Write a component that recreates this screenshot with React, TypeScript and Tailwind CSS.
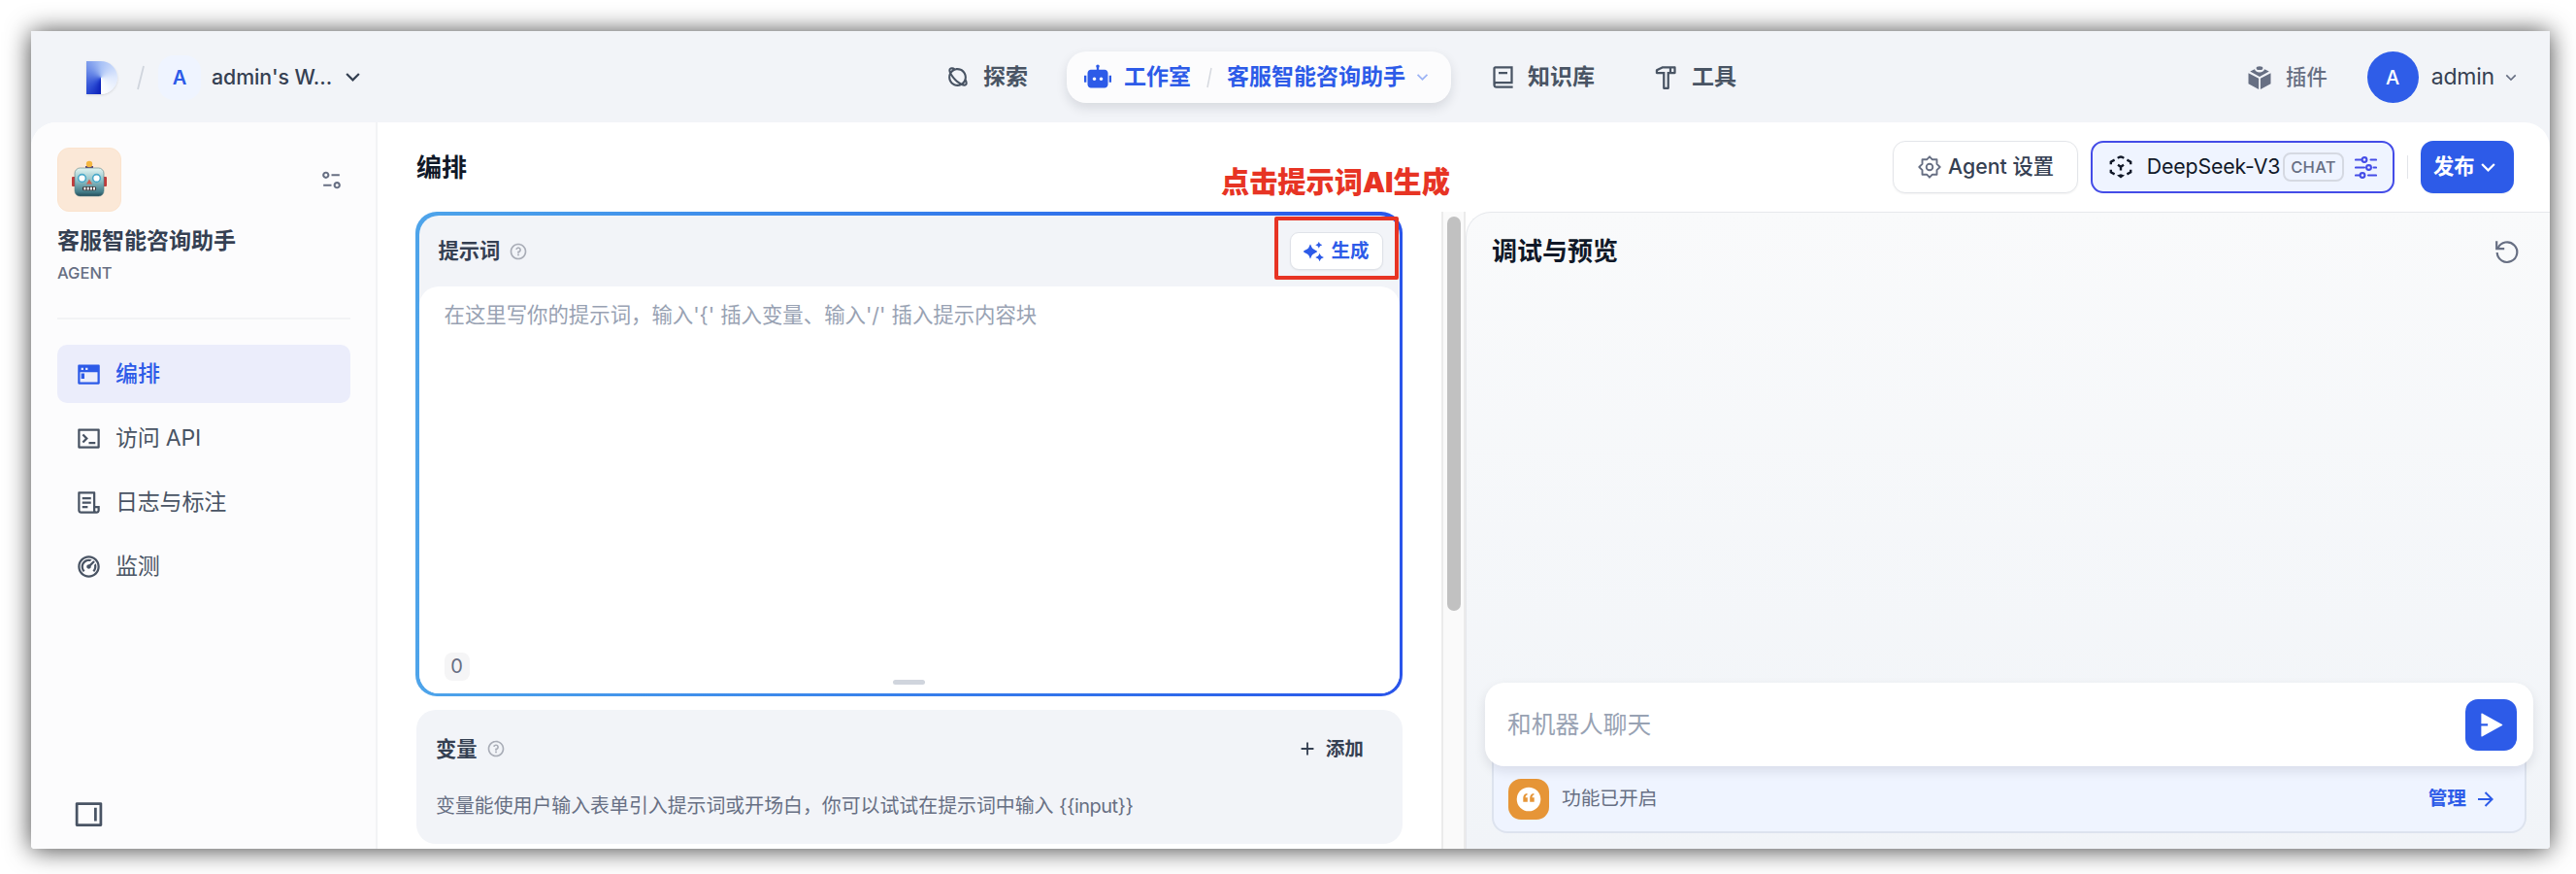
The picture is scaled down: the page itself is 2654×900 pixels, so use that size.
import type { ComponentType } from 'react'
import {
  RiAddLine,
  RiArrowDownSLine,
  RiArrowRightLine,
  RiBook2Line,
  RiDashboard2Line,
  RiEqualizer2Line,
  RiFileList3Line,
  RiHammerLine,
  RiLayoutRight2Line,
  RiPlanetLine,
  RiQuestionLine,
  RiRobot2Fill,
  RiSendPlane2Fill,
  RiTerminalBoxLine,
  RiTerminalWindowFill,
} from 'react-icons/ri'

interface MenuItem {
  label: string
  icon: ComponentType<{ className?: string }>
  active?: boolean
}

const MENU: MenuItem[] = [
  { label: '编排', icon: RiTerminalWindowFill, active: true },
  { label: '访问 API', icon: RiTerminalBoxLine },
  { label: '日志与标注', icon: RiFileList3Line },
  { label: '监测', icon: RiDashboard2Line },
]

function Logo() {
  return (
    <div className="h-[34px] w-8 shrink-0 rounded-r-full bg-[conic-gradient(from_0deg_at_48%_50%,#a9c2f6_0deg,#dfe9fd_90deg,#ffffff_180deg,#0a1fb8_180deg,#2f4fd6_230deg,#6d8de8_300deg,#a9c2f6_360deg)] shadow-sm" />
  )
}

function RobotFace() {
  return (
    <svg viewBox="0 0 36 38" className="-mt-[3px] h-[38px] w-9">
      <defs>
        <linearGradient id="face" x1="0" y1="0" x2="0" y2="1">
          <stop offset="0" stopColor="#e3f5f2" />
          <stop offset="0.45" stopColor="#8fc0c6" />
          <stop offset="0.85" stopColor="#437c88" />
          <stop offset="1" stopColor="#234b58" />
        </linearGradient>
      </defs>
      <rect x="0" y="17" width="4" height="10" rx="1" fill="#c23b3b" />
      <rect x="32" y="17" width="4" height="10" rx="1" fill="#c23b3b" />
      <path d="M14 6h8v4h-8z" fill="#5b4377" />
      <circle cx="18" cy="4" r="3.2" fill="#f4b63f" />
      <rect x="3" y="8" width="30" height="29" rx="5.5" fill="url(#face)" stroke="#557d83" strokeWidth="0.6" />
      <circle cx="10.5" cy="18.5" r="3.9" fill="#fff" stroke="#4aa9c9" strokeWidth="1.6" />
      <circle cx="25.5" cy="18.5" r="3.9" fill="#fff" stroke="#4aa9c9" strokeWidth="1.6" />
      <path d="M18 19.5l3 5h-6z" fill="#d2604f" />
      <rect x="11" y="27" width="14" height="4.2" rx="1.5" fill="#3b3437" />
      <path d="M12.4 27.8h2v2.6h-2zM15.7 27.8h2v2.6h-2zM18.9 27.8h2v2.6h-2zM22 27.8h2v2.6h-2z" fill="#fff" />
    </svg>
  )
}

function PluginIcon() {
  return (
    <svg viewBox="0 0 24 24" className="size-6" fill="currentColor">
      <path d="M.5 7.2l10.6 5.6V24L.5 18.3zM23.5 7.2l-10.6 5.6V24l10.6-5.7z" />
      <path d="M2.2 5.6L7 3.2c.3 2 2.3 3.2 5 3.2s4.7-1.2 5-3.2l4.8 2.4L12 10.9z" />
      <ellipse cx="12" cy="2.2" rx="3.4" ry="1.9" />
    </svg>
  )
}

function GearIcon() {
  return (
    <svg viewBox="0 0 24 24" className="h-6 w-6" fill="none" stroke="currentColor" strokeWidth="1.9" strokeLinejoin="round">
      <path d="M12 1.3l2.9 3h4.6v4.6L22.7 12l-3.2 3.1v4.6h-4.6l-2.9 3-2.9-3H4.5v-4.6L1.3 12l3.2-3.1V4.3h4.6z" />
      <circle cx="12" cy="12" r="3.3" />
    </svg>
  )
}

function ResetIcon() {
  return (
    <svg viewBox="0 0 26 26" className="size-[26px]" fill="none" stroke="currentColor" strokeWidth="2.2">
      <path d="M3.6 9.4A10.3 10.3 0 1 1 2.7 14" />
      <path d="M2.2 2.2v8h8" />
    </svg>
  )
}

function SparkleIcon() {
  return (
    <svg viewBox="0 0 21 20" className="h-5 w-[21px]" fill="currentColor">
      <path d="M7 2.6c.4 0 .7 2.3 2 3.9 1.3 1.5 5.1 2.7 5.1 3.5s-3.8 2-5.1 3.5c-1.3 1.6-1.6 3.9-2 3.9s-.7-2.3-2-3.9C3.7 12-.1 10.8-.1 10S3.700 8 5 6.500c1.3-1.600 1.600-3.900 2-3.900z" />
      <path d="M15.8 0c.3 0 .5 1.3 1.2 2s2.200.9 2.200 1.300-1.500.6-2.200 1.300-.9 2-1.200 2-.5-1.300-1.200-2-2.200-.9-2.200-1.300 1.500-.6 2.200-1.300.9-2 1.200-2zM16.600 12c.4 0 .6 1.700 1.500 2.500.9.9 2.700 1 2.700 1.500s-1.800.7-2.700 1.500c-.9.900-1.100 2.500-1.500 2.500s-.6-1.600-1.500-2.500c-.9-.8-2.700-1-2.700-1.500s1.800-.6 2.700-1.500c.9-.8 1.100-2.500 1.500-2.500z" />
    </svg>
  )
}

// Dashed cube used for models without a provider logo
function ModelIcon() {
  return (
    <svg viewBox="0 0 24 24" className="size-6" fill="none" stroke="#101828" strokeWidth="2.4">
      <path d="M8.8 2.9Q12 .2 15.2 2.9" />
      <path d="M8 20.5l4-1.3 4 1.3-4 3z" fill="#101828" stroke="none" />
      <path d="M5.6 4.6L1.8 6.6v2.6M18.4 4.6l3.8 2v2.6M1.8 14.8v2.6l3.8 2M22.2 14.8v2.6l-3.8 2" />
      <path d="M9 9.8l3 2 3-2M12 11.5v4" />
    </svg>
  )
}

function SlidersIcon() {
  return (
    <svg viewBox="0 0 23 23" className="size-[23px]" fill="none" stroke="#444ce7" strokeWidth="2.1" strokeLinecap="round">
      <path d="M1 3.5h6M16.5 3.5H22M1 11.5h9M19.5 11.5H22M1 19.5h3.5M14 19.5h8" />
      <circle cx="10" cy="3.5" r="2.4" />
      <circle cx="14.5" cy="11.5" r="2.4" />
      <circle cx="8" cy="19.5" r="2.4" />
    </svg>
  )
}

function QuoteBubble() {
  return (
    <svg viewBox="0 0 26 26" className="size-[26px]">
      <circle cx="13" cy="13" r="12.3" fill="#fff" />
      <path
        d="M11.8 8.3c-1.5.6-2.2 1.7-2.2 2.9h2.2v4.6H7.3v-4.2c0-2.6 1.4-4.2 4-4.7zM18.7 8.3c-1.5.6-2.2 1.7-2.2 2.9h2.2v4.6h-4.5v-4.2c0-2.6 1.4-4.2 4-4.7z"
        fill="#e69537"
      />
    </svg>
  )
}

function Header() {
  return (
    <header className="flex h-[94px] shrink-0 items-center justify-between pt-px pr-[30px] pl-[57px] text-[#495464]">
      <div className="flex w-[887px] items-center">
        <Logo />
        <svg viewBox="0 0 8 26" className="ml-5 h-[26px] w-2" stroke="#d0d5dd" strokeWidth="1.8">
          <path d="M1 25L7 1" />
        </svg>
        <div className="ml-3.5 flex h-[46px] w-11 items-center justify-center rounded-2xl bg-[#eff4ff] text-[20px] font-semibold text-[#2d5be8]">
          A
        </div>
        <span className="ml-[11px] text-[21.3px] font-medium tracking-[-0.05px] text-[#354052]">admin's W...</span>
        <RiArrowDownSLine className="ml-2 size-[27px] text-[#354052]" />
      </div>

      <nav className="flex flex-1 items-center text-[23px] font-bold">
        <RiPlanetLine className="-ml-0.5 size-[25px]" />
        <span className="ml-3.5 font-semibold">探索</span>
        <div className="ml-10 flex h-[53px] w-[396px] items-center rounded-[20px] bg-[#fcfcfd] pl-[18px] text-[#2d5be8] shadow-[0_5px_12px_rgba(16,24,40,0.12)]">
          <RiRobot2Fill className="size-7" />
          <span className="ml-[13px]">工作室</span>
          <svg viewBox="0 0 6 22" className="mx-4 h-[22px] w-1.5" stroke="#d6d9df" strokeWidth="1.5">
            <path d="M1 21L5 1" />
          </svg>
          <span className="-ml-px">客服智能咨询助手</span>
          <RiArrowDownSLine className="ml-[7px] size-[21px] text-[#9db4f5]" />
        </div>
        <RiBook2Line className="ml-[40px] size-[27px]" />
        <span className="ml-3 font-semibold">知识库</span>
        <RiHammerLine className="ml-[60px] size-[27px]" />
        <span className="ml-[13px] font-semibold">工具</span>
      </nav>

      <div className="flex items-center">
        <span className="text-[#676f83]">
          <PluginIcon />
        </span>
        <span className="ml-[15px] text-[21.3px] font-medium text-[#676f83]">插件</span>
        <div className="ml-[41px] flex size-[53px] items-center justify-center rounded-full bg-[#2f5de8] text-[20px] font-medium text-white">A</div>
        <span className="ml-[13px] text-[23px] tracking-[-0.2px] text-[#354052]">admin</span>
        <RiArrowDownSLine className="ml-[7px] size-5 text-[#676f83]" />
      </div>
    </header>
  )
}

function Sidebar() {
  return (
    <aside className="flex w-[357px] shrink-0 flex-col border-r-2 border-[#f2f3f5] bg-[#fcfcfd] px-[27px] pt-[26px] pb-[19px]">
      <div className="flex items-center justify-between">
        <div className="flex size-[66px] items-center justify-center rounded-xl border border-[#fbe3cd] bg-[#fbe8d7]">
          <RobotFace />
        </div>
        <RiEqualizer2Line className="mr-1.5 size-[25px] text-[#676f83]" />
      </div>
      <h2 className="mt-[13px] text-[23px] leading-[34px] font-semibold text-[#354052]">客服智能咨询助手</h2>
      <p className="mt-1 text-[16.5px] leading-6 font-medium text-[#676f83]">AGENT</p>
      <div className="mt-[34px] h-0.5 w-[302px] bg-[#f2f3f5]" />
      <nav className="mt-[26px] flex w-[302px] flex-col gap-1.5">
        {MENU.map(({ label, icon: Icon, active }) => (
          <a
            key={label}
            className={
              active
                ? 'flex h-[60px] items-center gap-3.5 rounded-[10px] bg-[#ebedfb] pl-[19px] text-[23px] font-medium text-[#2d5be8]'
                : 'flex h-[60px] items-center gap-3.5 rounded-[10px] pl-[19px] text-[23px] tracking-[-0.2px] text-[#495464]'
            }
          >
            <Icon className="size-[27px]" />
            {label}
          </a>
        ))}
      </nav>
      <RiLayoutRight2Line className="mt-auto ml-4 size-[33px] text-[#495464]" />
    </aside>
  )
}

function PromptEditor() {
  return (
    <section className="relative h-[499px] rounded-[22px] bg-gradient-to-r from-[#4ea4ea] to-[#2a55ea] p-[3.5px]">
      <div className="flex h-full flex-col rounded-[20px] bg-[#f2f4f8]">
        <div className="flex h-[73px] shrink-0 items-center justify-between pt-px pr-[17px] pl-5">
          <div className="flex items-center text-[21.3px] font-semibold text-[#354052]">
            提示词
            <RiQuestionLine className="ml-[9px] size-5 text-[#a9adb7]" />
          </div>
          <button className="flex h-[39px] w-24 items-center rounded-[9px] border border-[#dfe2e8] bg-white pl-[13px] text-[19.5px] font-semibold text-[#2d5be8] shadow-xs">
            <SparkleIcon />
            <span className="ml-2">生成</span>
          </button>
        </div>
        <div className="flex flex-1 flex-col rounded-[20px] bg-white pt-[13px]">
          <p className="pl-[26px] text-[21.4px] leading-8 text-[#98a2b3]">
            在这里写你的提示词，输入<span>{"'{' "}</span>插入变量、输入{"'/' "}插入提示内容块
          </p>
          <span className="mt-auto mb-[13px] ml-[26px] flex h-[29px] w-[26px] items-center justify-center rounded-lg bg-[#f5f5f6] text-[20px] text-[#676f83]">
            0
          </span>
        </div>
      </div>
      {/* Resize handle */}
      <div className="absolute bottom-3 left-[492px] h-[5px] w-[33px] rounded-sm bg-[#d0d5dd]" />
      {/* Callout around the generate button */}
      <div className="absolute top-[5px] right-[4px] h-[65px] w-[128px] rounded-[2px] border-4 border-[#e73424]" />
      <div className="absolute -top-[50px] right-[-49px] text-[29.2px] leading-10 font-black whitespace-nowrap text-[#e73424]">点击提示词AI生成</div>
    </section>
  )
}

function VariablesCard() {
  return (
    <section className="mt-[14px] ml-px h-[138px] rounded-[20px] bg-[#f2f4f8] pr-10 pl-5">
      <div className="flex items-center justify-between pt-6 leading-8">
        <div className="flex items-center text-[21.3px] font-bold text-[#354052]">
          变量
          <RiQuestionLine className="ml-[9px] size-5 text-[#a9adb7]" />
        </div>
        <div className="flex items-center text-[19.7px] font-semibold text-[#354052]">
          <RiAddLine className="mr-2 size-[22px]" />
          添加
        </div>
      </div>
      <p className="mt-[27px] text-[19.9px] leading-8 text-[#676f83]">
        变量能使用户输入表单引入提示词或开场白，你可以试试在提示词中输入 <span className="tracking-[-0.5px]">{'{{input}}'}</span>
      </p>
    </section>
  )
}

function Toolbar() {
  return (
    <div className="flex h-[92px] shrink-0 items-center pr-[37px] pl-10">
      <h1 className="text-[26px] font-bold text-[#101828]">编排</h1>
      <button className="ml-auto flex h-[54px] w-[191px] items-center rounded-[13px] border border-[#e3e5e9] bg-white pl-[25px] text-[21.3px] font-medium text-[#354052] shadow-xs">
        <span className="text-[#676f83]">
          <GearIcon />
        </span>
        <span className="ml-[7px] whitespace-nowrap">Agent 设置</span>
      </button>
      <button className="ml-[13px] flex h-[54px] w-[313px] items-center rounded-[13px] border-2 border-[#444ce7] bg-[#eff4ff] pl-[17px]">
        <ModelIcon />
        <span className="ml-3.5 w-[139px] text-[21.3px] tracking-[-0.15px] whitespace-nowrap text-[#101828]">DeepSeek-V3</span>
        <span className="ml-0.5 flex h-[30px] w-[63px] shrink-0 items-center justify-center rounded-lg border-2 border-[#d5d9e2] text-[16.5px] font-medium tracking-[0.3px] text-[#676f83]">
          CHAT
        </span>
        <span className="ml-[11px]">
          <SlidersIcon />
        </span>
      </button>
      <div className="ml-[13px] h-6 w-px bg-[#e3e5e9]" />
      <button className="ml-[13px] flex h-[54px] w-24 items-center rounded-[13px] bg-[#2d5be8] pl-[13px] text-[21.3px] font-semibold text-white shadow-xs">
        <span>发布</span>
        <RiArrowDownSLine className="size-[27px]" />
      </button>
    </div>
  )
}

function PreviewPanel() {
  return (
    <section className="flex flex-1 flex-col rounded-tl-[26px] border-t border-l border-[#e6e8ec] bg-gradient-to-b from-[#f9fafb] to-[#f1f4f8] pr-[17px] pb-4 pl-[19px]">
      <div className="flex items-center justify-between pt-5 pr-3.5 pl-[7px]">
        <h2 className="text-[26px] leading-10 font-bold text-[#101828]">调试与预览</h2>
        <span className="text-[#676f83]">
          <ResetIcon />
        </span>
      </div>
      <div className="z-10 mt-auto flex h-[86px] shrink-0 items-center justify-between rounded-[20px] bg-white pr-[17px] pl-[23px] shadow-[0_5px_12px_rgba(16,24,40,0.1)]">
        <span className="pt-px text-[24.7px] text-[#98a2b3]">和机器人聊天</span>
        <button className="flex size-[53px] items-center justify-center rounded-[13px] bg-[#2d5be8] text-white">
          <RiSendPlane2Fill className="size-[27px]" />
        </button>
      </div>
      <div className="mx-[7px] -mt-3 flex h-[81px] shrink-0 items-center rounded-b-[16px] border-2 border-t-0 border-[#dde3ee] bg-[#eff4ff] pt-[13px] pr-7 pl-[15px]">
        <div className="flex size-[42px] items-center justify-center rounded-[13px] bg-[#e69537]">
          <QuoteBubble />
        </div>
        <span className="ml-[13px] text-[19.7px] text-[#676f83]">功能已开启</span>
        <span className="ml-auto text-[19.7px] font-semibold text-[#2d5be8]">管理</span>
        <RiArrowRightLine className="ml-2 size-[24px] text-[#2d5be8]" />
      </div>
    </section>
  )
}

export default function App() {
  return (
    <div className="h-[900px] w-[2654px] overflow-hidden bg-white p-8 font-['Inter','Noto_Sans_CJK_SC',sans-serif]">
      <div className="flex h-[842px] w-[2595px] flex-col overflow-hidden rounded-b-[4px] bg-[#f2f4f8] shadow-[0_1px_26px_rgba(0,0,0,0.75)]">
        <Header />
        <div className="flex min-h-0 flex-1 overflow-hidden rounded-t-[26px] bg-white">
          <Sidebar />
          <main className="flex min-w-0 flex-1 flex-col">
            <Toolbar />
            <div className="flex min-h-0 flex-1">
              <div className="w-[1096px] shrink-0 pr-10 pl-[39px]">
                <PromptEditor />
                <VariablesCard />
              </div>
              {/* Scrollbar */}
              <div className="w-[25px] shrink-0 border-x-2 border-[#ebebeb] bg-[#fafafa] px-[4px] pt-[5px]">
                <div className="h-[406px] w-[14px] rounded-full bg-[#c1c1c1]" />
              </div>
              <PreviewPanel />
            </div>
          </main>
        </div>
      </div>
    </div>
  )
}
